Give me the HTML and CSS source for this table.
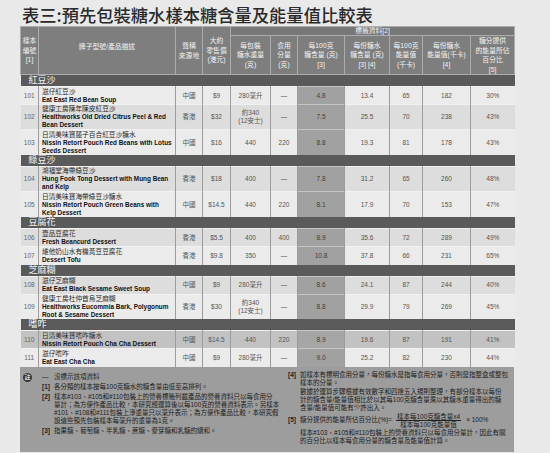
FILE: index.html
```html
<!DOCTYPE html>
<html lang="zh-Hant">
<head>
<meta charset="utf-8">
<link rel="stylesheet" href="styles.css">
</head>
<body>
<div class="page">
  <h1 class="title">表三:預先包裝糖水樣本糖含量及能量值比較表</h1>
  <table class="tbl">
    <colgroup>
      <col class="c-no"><col class="c-brand"><col class="c-origin"><col class="c-price"><col class="c-wt"><col class="c-serv"><col class="c-s100"><col class="c-sserv"><col class="c-e100"><col class="c-eserv"><col class="c-pct">
    </colgroup>
    <thead>
      <tr class="h1">
        <th rowspan="2">樣本<br>編號<br>[1]</th>
        <th rowspan="2" class="th-brand">牌子型號/產品描述</th>
        <th rowspan="2">聲稱<br>來源地</th>
        <th rowspan="2">大約<br>零售價<br>(港元)</th>
        <th colspan="7" class="th-group">標籤資料[2]</th>
      </tr>
      <tr class="h2">
        <th>每包裝<br>糖水重量<br>(克)</th>
        <th>食用<br>分量<br>(克)</th>
        <th>每100克<br>糖含量 (克)<br>[3]</th>
        <th>每份糖水<br>糖含量 (克)<br>[3] [4]</th>
        <th>每100克<br>能量值<br>(千卡)</th>
        <th>每份糖水<br>能量值(千卡)<br>[4]</th>
        <th>糖分提供<br>的能量所佔<br>百分比<br>[5]</th>
      </tr>
    </thead>
    <tbody>
      <tr class="cat"><td colspan="11">紅豆沙</td></tr>
      <tr class="r2 lt">
        <td class="no">101</td>
        <td class="brand"><span class="zh">滋仔紅豆沙</span><b class="en">Eat East Red Bean Soup</b></td>
        <td>中國</td><td>$9</td><td>280毫升</td><td>—</td><td class="s">4.8</td><td>13.4</td><td>65</td><td>182</td><td>30%</td>
      </tr>
      <tr class="r3 dk">
        <td class="no">102</td>
        <td class="brand"><span class="zh">健康工房陳年陳皮紅豆沙</span><b class="en">Healthworks Old Dried Citrus Peel &amp; Red<br>Bean Dessert</b></td>
        <td>香港</td><td>$32</td><td>約340<br>(12安士)</td><td>—</td><td class="s">7.5</td><td>25.5</td><td>70</td><td>238</td><td>43%</td>
      </tr>
      <tr class="r3 lt">
        <td class="no">103</td>
        <td class="brand"><span class="zh">日清美味寶蓮子百合紅豆沙糖水</span><b class="en">Nissin Retort Pouch Red Beans with Lotus<br>Seeds Dessert</b></td>
        <td>中國</td><td>$16</td><td>440</td><td>220</td><td class="s">8.8</td><td>19.3</td><td>81</td><td>178</td><td>43%</td>
      </tr>
      <tr class="cat"><td colspan="11">綠豆沙</td></tr>
      <tr class="r3 dk">
        <td class="no">104</td>
        <td class="brand"><span class="zh">鴻福堂海帶綠豆沙</span><b class="en">Hung Fook Tong Dessert with Mung Bean<br>and Kelp</b></td>
        <td>香港</td><td>$18</td><td>400</td><td>—</td><td class="s">7.8</td><td>31.2</td><td>65</td><td>260</td><td>48%</td>
      </tr>
      <tr class="r3 lt">
        <td class="no">105</td>
        <td class="brand"><span class="zh">日清美味寶海帶綠豆沙糖水</span><b class="en">Nissin Retort Pouch Green Beans with<br>Kelp Dessert</b></td>
        <td>中國</td><td>$14.5</td><td>440</td><td>220</td><td class="s">8.1</td><td>17.9</td><td>70</td><td>153</td><td>47%</td>
      </tr>
      <tr class="cat"><td colspan="11">豆腐花</td></tr>
      <tr class="r2 dk">
        <td class="no">106</td>
        <td class="brand"><span class="zh">壹品豆腐花</span><b class="en">Fresh Beancurd Dessert</b></td>
        <td>香港</td><td>$5.5</td><td>400</td><td>400</td><td class="s">8.9</td><td>35.6</td><td>72</td><td>289</td><td>49%</td>
      </tr>
      <tr class="r2 lt">
        <td class="no">107</td>
        <td class="brand"><span class="zh">維他奶山水有機黃豆豆腐花</span><b class="en">Dessert Tofu</b></td>
        <td>香港</td><td>$9.8</td><td>350</td><td>—</td><td class="s">10.8</td><td>37.8</td><td>66</td><td>231</td><td>65%</td>
      </tr>
      <tr class="cat"><td colspan="11">芝麻糊</td></tr>
      <tr class="r2 dk">
        <td class="no">108</td>
        <td class="brand"><span class="zh">滋仔芝麻糊</span><b class="en">Eat East Black Sesame Sweet Soup</b></td>
        <td>中國</td><td>$9</td><td>280毫升</td><td>—</td><td class="s">8.6</td><td>24.1</td><td>87</td><td>244</td><td>40%</td>
      </tr>
      <tr class="r3 lt">
        <td class="no">109</td>
        <td class="brand"><span class="zh">健康工房杜仲首烏芝麻糊</span><b class="en">Healthworks Eucommia Bark, Polygonum<br>Root &amp; Sesame Dessert</b></td>
        <td>香港</td><td>$30</td><td>約340<br>(12安士)</td><td>—</td><td class="s">8.8</td><td>29.9</td><td>79</td><td>269</td><td>45%</td>
      </tr>
      <tr class="cat"><td colspan="11">嗜咋</td></tr>
      <tr class="r2 hl">
        <td class="no">110</td>
        <td class="brand"><span class="zh">日清美味寶嗜咋糖水</span><b class="en">Nissin Retort Pouch Cha Cha Dessert</b></td>
        <td>中國</td><td>$14.5</td><td>440</td><td>220</td><td class="s">8.9</td><td>19.6</td><td>87</td><td>191</td><td>41%</td>
      </tr>
      <tr class="r2 lt">
        <td class="no">111</td>
        <td class="brand"><span class="zh">滋仔嗜咋</span><b class="en">Eat East Cha Cha</b></td>
        <td>中國</td><td>$9</td><td>280毫升</td><td>—</td><td class="s">9.0</td><td>25.2</td><td>82</td><td>230</td><td>44%</td>
      </tr>
    </tbody>
  </table>

  <div class="notes">
    <div class="ico">註</div>
    <div class="ncol nleft">
      <div class="it"><span class="lb dash">—</span><span class="tx">沒標示該項資料</span></div>
      <div class="it"><span class="lb">[1]</span><span class="tx">各分類的樣本按每100克糖水的糖含量由低至高排列。</span></div>
      <div class="it"><span class="lb">[2]</span><span class="tx">樣本#103、#105和#110包裝上的營養標籤列載產品的營養資料只以每食用分<br>量計；為方便作產品比較，本研究經運算後以每100克的營養資料表示。另樣本<br>#101、#108和#111包裝上淨重量只以毫升表示；為方便作產品比較，本研究假<br>設這些預先包裝樣本每毫升的重量為1克。</span></div>
      <div class="it"><span class="lb">[3]</span><span class="tx">指果糖、葡萄糖、半乳糖、蔗糖、麥芽糖和乳糖的總和。</span></div>
    </div>
    <div class="ncol nright">
      <div class="it"><span class="lb">[4]</span><span class="tx">如樣本有標明食用分量，每份糖水是指每食用分量，否則是指整盒或整包<br>樣本的分量。</span></div>
      <div class="it"><span class="lb"></span><span class="tx">數據於運算步驟根據有效數字和四捨五入規則整理，有部分樣本以每份<br>計的糖含量/能量值相比於以其每100克糖含量乘以其糖水重量得出的糖<br>含量/能量值可能有少許出入。</span></div>
      <div class="it formula"><span class="lb">[5]</span><span class="tx">糖分提供的能量所佔百分比(%)=</span><span class="frac"><span class="num">樣本每100克糖含量x4</span><span class="den">樣本每100克能量值</span></span><span class="tx times">× 100%</span></div>
      <div class="it"><span class="lb"></span><span class="tx">樣本#103、#105和#110包裝上的營養資料只以每食用分量計，因此有關<br>的百分比以樣本每食用分量的糖含量及能量值計算。</span></div>
    </div>
  </div>
</div>
</body>
</html>
```

FILE: styles.css
```css
* {
  box-sizing: border-box;
  margin: 0;
  padding: 0;
}

body {
  background: #e9e9e9;
  font-family: "Liberation Sans", "Noto Sans CJK TC", sans-serif;
  color: #333;
  width: 550px;
  height: 453px;
  overflow: hidden;
}

.page {
  padding-left: 20px;
}

.title {
  font-family: "Noto Sans CJK TC", sans-serif;
  font-weight: 500;
  font-size: 17.3px;
  line-height: 20px;
  height: 26px;
  padding: 5px 0 0 2px;
  color: #2a2a2a;
  white-space: nowrap;
}

.tbl {
  width: 494px;
  border-collapse: collapse;
  table-layout: fixed;
}

.c-no { width: 18px; }
.c-brand { width: 137px; }
.c-origin { width: 27px; }
.c-price { width: 28px; }
.c-wt { width: 40px; }
.c-serv { width: 27px; }
.c-s100 { width: 47px; }
.c-sserv { width: 45px; }
.c-e100 { width: 33px; }
.c-eserv { width: 48px; }
.c-pct { width: 44px; }

.tbl th {
  background: #7e7e7e;
  color: #f3f3f3;
  font-weight: normal;
  font-size: 6.8px;
  line-height: 9.5px;
  text-align: center;
  vertical-align: middle;
  border: 1px solid #acacac;
  padding: 0;
  white-space: nowrap;
}

.tbl thead tr.h1 { height: 9px; }
.tbl thead tr.h2 { height: 39px; }

.tbl th.th-group {
  background: #777;
  line-height: 8px;
}

.tbl th.th-brand {
  padding-bottom: 8px;
}

.tbl td {
  font-size: 6.5px;
  line-height: 8px;
  color: #555;
  text-align: center;
  vertical-align: middle;
  border-left: 1px solid #9c9c9c;
  border-right: 1px solid #9c9c9c;
  border-top: 1px solid #f1f1f1;
  padding: 0 1px;
  white-space: nowrap;
}

.tbl td.no {
  border-left: none;
  color: #666;
}

.tbl td:last-child {
  border-right: none;
}

.tbl tr.lt td { background: #ebebeb; }
.tbl tr.dk td { background: #dddddd; }
.tbl tr.hl td { background: #c2c2c2; }
.tbl tr td.s { background: #a1a1a1; color: #3e3e3e; border-top-color: #c6c6c6; }
.tbl tr.hl td.s { background: #a6a6a6; }

.tbl tr.r2 { height: 18px; }
.tbl tr.r3 { height: 25.3px; }

.tbl tr.cat { height: 11.5px; }
.tbl tr.cat td {
  background: #5a5a5a;
  color: #f4f4f4;
  font-size: 9px;
  line-height: 11px;
  text-align: left;
  padding: 0 0 0 8px;
  border: none;
}

.tbl td.brand {
  text-align: left;
  padding: 0 0 0 3px;
  color: #222;
}

.brand .zh {
  display: block;
  font-size: 6.7px;
  line-height: 8px;
  color: #2a2a2a;
}

.brand .en {
  display: block;
  font-size: 6.4px;
  line-height: 8px;
  font-weight: bold;
  color: #111;
}

.notes {
  display: grid;
  grid-template-columns: 9px 236px 222px;
  column-gap: 10px;
  align-items: start;
  width: 494px;
  height: 85px;
  padding: 4px 4px 0 3px;
  background: #9d9d9d;
  color: #1c1c1c;
  font-size: 6.5px;
  line-height: 8px;
}

.ico {
  width: 9px;
  height: 9px;
  margin-top: 2px;
  border-radius: 50%;
  background: #333;
  color: #ddd;
  font-size: 6px;
  line-height: 9px;
  text-align: center;
  font-weight: bold;
}

.ncol {
  display: flex;
  flex-direction: column;
}

.nleft {
  padding-top: 2px;
  gap: 2px;
}

.nright {
  gap: 1px;
}

.it {
  display: flex;
  white-space: nowrap;
}

.lb {
  flex: none;
  width: 12px;
  font-weight: bold;
  color: #222;
}

.lb.dash {
  font-weight: normal;
}

.tx {
  flex: none;
}

.formula {
  align-items: center;
  height: 15px;
}

.frac {
  display: flex;
  flex-direction: column;
  align-items: center;
  margin-left: 4px;
  line-height: 7px;
}

.frac .num {
  border-bottom: 1px solid #222;
  padding: 0 1px;
}

.frac .den {
  padding: 0 1px;
}

.times {
  margin-left: 5px;
}
```
